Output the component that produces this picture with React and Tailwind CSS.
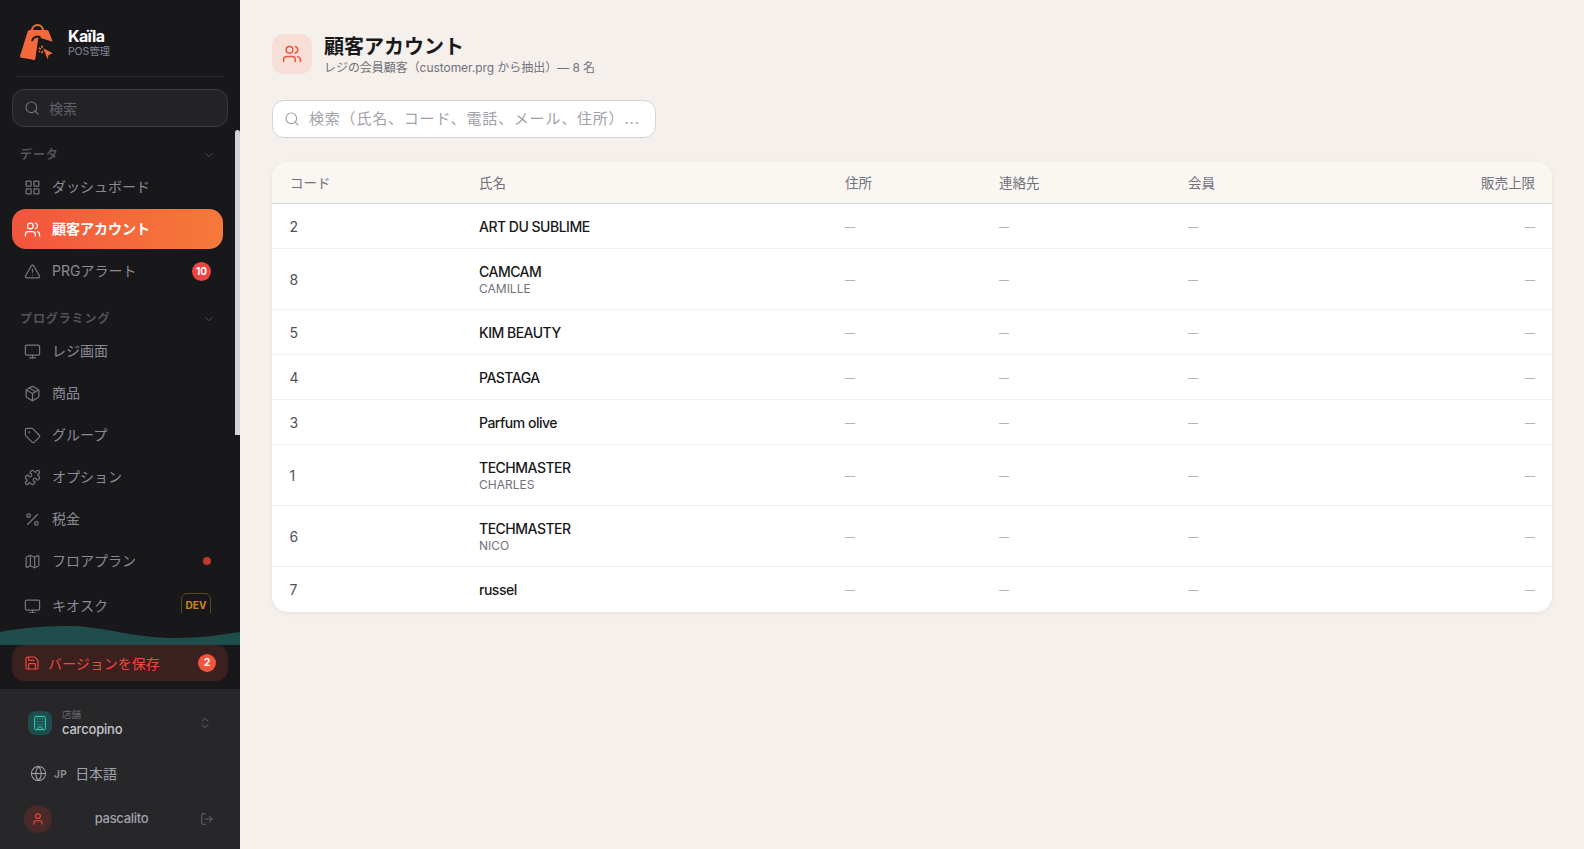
import React from 'react';
import { Search, ChevronDown, LayoutGrid, Users, TriangleAlert, Monitor, Package, Tag, Puzzle, Percent, Map, Save, Building, ChevronsUpDown, Globe, User, LogOut } from 'lucide-react';

function Logo() {
  return (
    <svg width="34" height="38" viewBox="0 0 34 38" fill="none">
      <path d="M11.700 9 C11.700 -0.500 23.300 -0.500 23.300 9" stroke="#f26a3a" strokeWidth="2" fill="none" />
      <path d="M9.500 7 H27 Q28.300 7 28.800 8.500 L32.700 18.700 L16.700 13.700 L15 37 L1.500 34.800 Q-0.300 34.300 0.200 32.500 L7.700 8.500 Q8.100 7 9.500 7 Z" fill="#f26a3a" />
      <path d="M16.700 13.700 L12.500 36.600 L15 37 L18.500 14.300 Z" fill="#f26a3a" />
      <path d="M12 18 C13 13.500 18 12.500 20.500 14.800" stroke="#18181b" strokeWidth="2" fill="none" />
      <path d="M23.300 25.300 L32.700 30.300 L28.600 32 L27.700 36.300 Z" fill="#f26a3a" />
      <path d="M21.800 22.500 L22.300 25 M18.800 25 L21 26 M23 28 L21.500 30 M19 29 L20 28" stroke="#f26a3a" strokeWidth="1.500" />
    </svg>
  );
}

function NavItem({ icon: Icon, label, active, right, tall }) {
  return (
    <div className={`flex items-center gap-[11px] px-[12px] rounded-[14px] w-[211px] ${tall ? 'h-[46px]' : 'h-[40px]'} ${active ? 'bg-gradient-to-r from-[#f2543d] to-[#f6793a] text-white font-bold' : 'text-[#8b8b94]'}`}>
      <Icon size={17} strokeWidth={1.75} className={active ? 'text-white shrink-0' : 'text-[#74747c] shrink-0'} />
      <span className="flex-1 text-[14px] leading-5">{label}</span>
      {right}
    </div>
  );
}

function SectionHead({ label, className }) {
  return (
    <div className={`flex items-center justify-between pl-[8px] pr-[12px] h-[20px] ${className}`}>
      <span className="text-[12px] font-semibold tracking-[0.9px] text-[#52525b]">{label}</span>
      <ChevronDown size={14} strokeWidth={1.5} className="text-[#52525b]" />
    </div>
  );
}

const rows = [
  ['2', 'ART DU SUBLIME'],
  ['8', 'CAMCAM', 'CAMILLE'],
  ['5', 'KIM BEAUTY'],
  ['4', 'PASTAGA'],
  ['3', 'Parfum olive'],
  ['1', 'TECHMASTER', 'CHARLES'],
  ['6', 'TECHMASTER', 'NICO'],
  ['7', 'russel'],
];

function Dash({ right }) {
  return <td className={`pt-[2px] text-[10px] leading-5 text-[#a1a1aa] ${right ? 'text-right pl-4 pr-[17px]' : 'px-4'}`}>—</td>;
}

export default function App() {
  return (
    <div className="flex h-screen w-full overflow-hidden bg-[#f5f0eb] font-['Inter','Noto_Sans_CJK_JP',sans-serif]">
      <aside className="w-[240px] shrink-0 h-full flex flex-col bg-[#18181b]">
        <div className="mx-[16px] h-[77px] pt-[23px] border-b border-[#27272a] flex items-start gap-[14px] px-[4px]">
          <Logo />
          <div className="flex flex-col pt-[4px]">
            <span className="text-[16px] leading-[18px] font-bold tracking-[-0.6px] text-white">Kaïla</span>
            <span className="text-[10.500px] leading-[14px] tracking-[-0.1px] text-[#7d8797]">POS管理</span>
          </div>
        </div>
        <div className="mx-[12px] mt-[12px] h-[38px] rounded-[12px] border border-[#3a3a3e] bg-[#232326] flex items-center gap-[9px] px-[11px] shrink-0">
          <Search size={16} strokeWidth={1.75} className="text-[#71717a]" />
          <span className="text-[14px] text-[#5f5f67]">検索</span>
        </div>
        <div className="relative flex-1 min-h-0 overflow-hidden">
          <div className="absolute right-0 top-[3px] w-[5px] h-[305px] rounded-t-sm bg-[#d4d4d8]" />
          <div className="pt-[18px] px-[12px] flex flex-col gap-[2px]">
            <SectionHead label="データ" />
            <NavItem icon={LayoutGrid} label="ダッシュボード" />
            <NavItem icon={Users} label="顧客アカウント" active />
            <NavItem icon={TriangleAlert} label="PRGアラート" right={<span className="w-[19px] h-[19px] rounded-full bg-[#ef4444] text-white text-[10px] font-bold flex items-center justify-center">10</span>} />
            <SectionHead label="プログラミング" className="mt-[16px]" />
            <NavItem icon={Monitor} label="レジ画面" />
            <NavItem icon={Package} label="商品" />
            <NavItem icon={Tag} label="グループ" />
            <NavItem icon={Puzzle} label="オプション" />
            <NavItem icon={Percent} label="税金" />
            <NavItem icon={Map} label="フロアプラン" right={<span className="w-[8px] h-[8px] rounded-full bg-[#c0392b]" />} />
            <NavItem icon={Monitor} label="キオスク" tall right={<span className="w-[30px] h-[26px] shrink-0 rounded-md border border-[#5c4a1c] text-[#c98a14] text-[10px] font-bold flex items-center justify-center pb-[1px]">DEV</span>} />
          </div>
        </div>
        <svg className="block mt-[13px] shrink-0" width="240" height="19" viewBox="0 0 240 19" preserveAspectRatio="none">
          <path d="M0 6 C25 1 50 0 72 0 C105 1 135 12 175 12 C200 12 220 9 240 6 V19 H0 Z" fill="#1f4d4c" />
        </svg>
        <div className="shrink-0 h-[44px]">
          <div className="mx-[12px] h-[36px] rounded-[12px] bg-[#3a201e] flex items-center gap-[8px] px-[12px]">
            <Save size={16} strokeWidth={1.75} className="text-[#ef4a38]" />
            <span className="flex-1 text-[14px] text-[#ef4a38]">バージョンを保存</span>
            <span className="w-[18px] h-[18px] rounded-full bg-[#f2543d] text-white text-[10.500px] font-bold flex items-center justify-center">2</span>
          </div>
        </div>
        <div className="shrink-0 h-[160px] bg-[#27272a] flex flex-col">
          <div className="mt-[22px] h-[24px] flex items-center pl-[28px] pr-[28px]">
            <div className="w-[24px] h-[24px] rounded-lg bg-[#1f4d4c] flex items-center justify-center">
              <Building size={16} strokeWidth={1.5} className="text-[#2dd4bf]" />
            </div>
            <div className="ml-[10px] flex-1 flex flex-col">
              <span className="text-[9.500px] leading-[12px] text-[#6b6b73]">店舗</span>
              <span className="text-[13px] leading-[16px] font-medium tracking-[-0.2px] text-[#c5c5cc]">carcopino</span>
            </div>
            <ChevronsUpDown size={14} strokeWidth={1.5} className="text-[#71717a]" />
          </div>
          <div className="mt-[28px] h-[20px] flex items-center pl-[30px]">
            <Globe size={17} strokeWidth={1.5} className="text-[#a1a1aa]" />
            <span className="ml-[7px] pt-[2px] text-[10px] font-bold tracking-[0.4px] text-[#8b8b94]">JP</span>
            <span className="ml-[8px] text-[14px] text-[#a1a1aa]">日本語</span>
          </div>
          <div className="mt-[22px] h-[28px] flex items-center pl-[24px] pr-[26px]">
            <div className="w-[28px] h-[28px] rounded-full bg-[#4a2a28] flex items-center justify-center">
              <User size={14} strokeWidth={1.75} className="text-[#ef4a38]" />
            </div>
            <span className="flex-1 text-center pr-[9px] text-[13px] font-medium tracking-[-0.3px] text-[#a1a1aa]">pascalito</span>
            <LogOut size={14} strokeWidth={1.5} className="text-[#71717a]" />
          </div>
        </div>
      </aside>
      <main className="flex-1 min-w-0 pl-[32px] pr-[32px] pt-[34px]">
        <div className="flex items-center gap-[12px] h-[40px]">
          <div className="w-[40px] h-[40px] rounded-xl bg-[#f7ded6] flex items-center justify-center">
            <Users size={20} strokeWidth={1.75} className="text-[#f2543d]" />
          </div>
          <div className="flex flex-col mt-[2px]">
            <h1 className="text-[20px] leading-[26px] font-bold text-[#18181b]">顧客アカウント</h1>
            <p className="text-[12px] leading-[16px] tracking-[-0.05px] text-[#71717a]">レジの会員顧客（customer.prg から抽出）— 8 名</p>
          </div>
        </div>
        <div className="mt-[26px] w-[384px] h-[38px] rounded-xl bg-white border border-[#d4d4d8] flex items-center gap-[9px] px-[11px]">
          <Search size={16} strokeWidth={1.75} className="text-[#a1a1aa] shrink-0" />
          <span className="text-[15px] tracking-[0.8px] text-[#a1a1aa] whitespace-nowrap">検索（氏名、コード、電話、メール、住所）...</span>
        </div>
        <div className="mt-[24px] rounded-2xl bg-white overflow-hidden shadow-[0_1px_6px_rgba(0,0,0,0.06)]">
          <table className="w-full table-fixed border-collapse">
            <colgroup>
              <col className="w-[191px]" />
              <col className="w-[366px]" />
              <col className="w-[154px]" />
              <col className="w-[189px]" />
              <col />
            </colgroup>
            <thead>
              <tr className="h-[41px] bg-[#faf6f2] border-b border-[#d4d4d8] text-[13.500px] text-[#71717a]">
                <th className="px-[18px] pt-[2px] font-normal text-left">コード</th>
                <th className="px-4 pt-[2px] font-normal text-left">氏名</th>
                <th className="px-4 pt-[2px] font-normal text-left">住所</th>
                <th className="px-4 pt-[2px] font-normal text-left">連絡先</th>
                <th className="px-4 pt-[2px] font-normal text-left">会員</th>
                <th className="pl-4 pr-[17px] pt-[2px] font-normal text-right">販売上限</th>
              </tr>
            </thead>
            <tbody>
              {rows.map((r, i) => (
                <tr key={i} className={i < rows.length - 1 ? 'border-b border-[#f0f0f1]' : ''}>
                  <td className="px-[17.500px] pt-[2px] text-[14px] leading-5 text-[#52525b]">{r[0]}</td>
                  <td className={`px-4 pt-[13px] ${r[2] ? 'pb-[13px]' : i === rows.length - 1 ? 'pb-[12px]' : 'pb-[11px]'}`}>
                    <div className="text-[14px] leading-5 font-[450] tracking-[-0.5px] text-[#18181b]">{r[1]}</div>
                    {r[2] && <div className="text-[12px] leading-[14px] text-[#71717a]">{r[2]}</div>}
                  </td>
                  <Dash />
                  <Dash />
                  <Dash />
                  <Dash right />
                </tr>
              ))}
            </tbody>
          </table>
        </div>
      </main>
    </div>
  );
}
